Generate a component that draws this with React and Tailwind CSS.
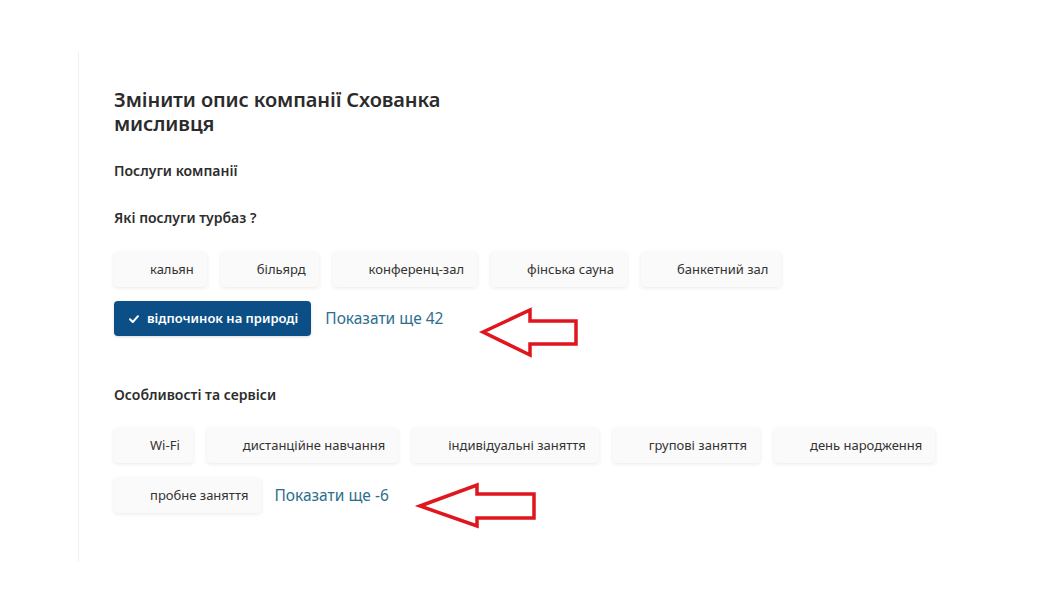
const services = ['кальян', 'більярд', 'конференц-зал', 'фінська сауна', 'банкетний зал']
const features = ['Wi-Fi', 'дистанційне навчання', 'індивідуальні заняття', 'групові заняття', 'день народження']

function Chip({ label, selected }) {
  if (selected) {
    return (
      <button
        type="button"
        className="flex h-[35px] items-center gap-[7px] rounded-[4px] bg-[#0b4f86] pl-[14px] pr-[13px] text-[13px] font-semibold text-white shadow-[0_1px_3px_rgba(0,0,0,0.15)]"
      >
        <svg width="12" height="12" viewBox="0 0 12 12" className="shrink-0">
          <path d="M2 6.3 L4.8 9 L10 3.2" fill="none" stroke="white" strokeWidth="2" strokeLinecap="round" strokeLinejoin="round" />
        </svg>
        {label}
      </button>
    )
  }
  return (
    <button
      type="button"
      className="flex h-[35px] items-center rounded-[4px] bg-[#fafafa] pl-[36px] pr-[13px] text-[13px] text-[#333] shadow-[0_1px_4px_rgba(0,0,0,0.09)]"
    >
      {label}
    </button>
  )
}

function ShowMore({ children }) {
  return <span className="text-[15.5px] text-[#2d6e8e]">{children}</span>
}

function Arrow({ points }) {
  return (
    <polygon points={points} fill="white" stroke="#e0161e" strokeWidth="3.5" strokeLinejoin="miter" />
  )
}

export default function App() {
  return (
    <div className="relative h-[600px] w-[1064px] bg-white font-['Noto_Sans','Open_Sans',sans-serif] text-[#2d2d2d]">
      <div className="pt-[52px] pl-[78px]">
        <section className="border-l border-[#efefef] pb-[49px] pl-[35px] pt-[36px]">
          <h1 className="w-[340px] text-[20px] font-semibold leading-[24px] tracking-[-0.1px] text-[#2b2b2b]">
            Змінити опис компанії Схованка мисливця
          </h1>
          <h2 className="mt-[25px] text-[14px] font-semibold leading-[20px]">Послуги компанії</h2>
          <h3 className="mt-[27px] text-[14px] font-semibold leading-[20px]">Які послуги турбаз ?</h3>
          <div className="mt-[24px] flex flex-wrap gap-[14px]">
            {services.map((s) => (
              <Chip key={s} label={s} />
            ))}
          </div>
          <div className="mt-[14px] flex items-center gap-[14px]">
            <Chip label="відпочинок на природі" selected />
            <ShowMore>Показати ще 42</ShowMore>
          </div>
          <h2 className="mt-[49px] text-[14px] font-semibold leading-[20px]">Особливості та сервіси</h2>
          <div className="mt-[23px] flex flex-wrap gap-[14px]">
            {features.map((s) => (
              <Chip key={s} label={s} />
            ))}
          </div>
          <div className="mt-[15px] flex items-center gap-[13px]">
            <Chip label="пробне заняття" />
            <ShowMore>Показати ще -6</ShowMore>
          </div>
        </section>
      </div>

      {/* red annotation arrows */}
      <svg className="pointer-events-none absolute left-0 top-0" width="1064" height="600" viewBox="0 0 1064 600">
        <Arrow points="483,332 530,310 530,321 576,321 576,344 530,344 530,355" />
        <Arrow points="420,506 477,485 477,494 534,494 534,518 477,518 477,526" />
      </svg>
    </div>
  )
}
